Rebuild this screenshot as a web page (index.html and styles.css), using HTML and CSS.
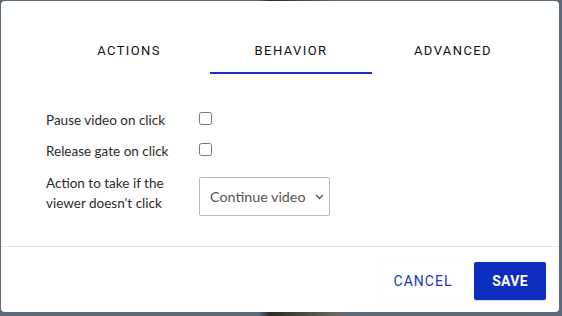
FILE: index.html
```html
<!DOCTYPE html>
<html lang="en">

<head>
  <meta charset="UTF-8" />
  <meta name="viewport" content="width=device-width, initial-scale=1.0" />
  <title>Behavior</title>
  <link rel="stylesheet" href="styles.css">
</head>

<body>
  <div class="dialog">
    <nav class="tabs">
      <div class="tab">Actions</div>
      <div class="tab active">Behavior</div>
      <div class="tab">Advanced</div>
    </nav>

    <form class="form">
      <div class="row">
        <label for="pause">Pause video on click</label>
        <input type="checkbox" id="pause" />
      </div>
      <div class="row">
        <label for="release">Release gate on click</label>
        <input type="checkbox" id="release" />
      </div>
      <div class="row row-top">
        <label for="action">Action to take if the<br />viewer doesn't click</label>
        <div class="select-wrap">
          <select id="action">
            <option>Continue video</option>
            <option>Pause video</option>
          </select>
          <svg class="chevron" width="9" height="6" viewBox="0 0 9 6">
            <path d="M1 1l3.5 3.5L8 1" fill="none" stroke="#555" stroke-width="1.4" />
          </svg>
        </div>
      </div>
    </form>

    <div class="footer">
      <button type="button" class="btn btn-cancel">Cancel</button>
      <button type="button" class="btn btn-save">Save</button>
    </div>
  </div>
</body>

</html>
```

FILE: styles.css
```css
html,
body {
  margin: 0;
  height: 100%;
}

body {
  background: linear-gradient(90deg, #5b6b7a 0%, #5b6b7a 46%, #2a2a26 48%, #6b6a5e 60%, #5b6b7a 62%);
  padding: 1px 3px 4px 1px;
  box-sizing: border-box;
  font-family: Lato, "Noto Sans", sans-serif;
}

.dialog {
  background: white;
  border-radius: 4px;
  height: 100%;
  display: flex;
  flex-direction: column;
}

.tabs {
  display: grid;
  grid-template-columns: repeat(3, 162px);
  justify-content: center;
  margin: 28px 0 0 22px;
}

.tab {
  text-align: center;
  font-family: Roboto, "Liberation Sans", sans-serif;
  font-size: 13px;
  line-height: 16px;
  letter-spacing: 1.4px;
  text-transform: uppercase;
  color: #111;
  padding: 14px 0 13px;
  border-bottom: 2px solid transparent;
}

.tab.active {
  border-bottom-color: #1431bd;
}

.form {
  padding: 36px 0 0 45px;
  flex: 1;
}

.row {
  display: grid;
  grid-template-columns: 153px auto;
  align-items: center;
  margin-bottom: 11px;
}

.row-top {
  align-items: start;
  margin-top: 12px;
}

label {
  font-size: 13.5px;
  line-height: 20px;
  color: #2b2b2b;
}

input[type="checkbox"] {
  margin: -4px 0 0 0;
  width: 13px;
  height: 13px;
  justify-self: start;
}

.select-wrap {
  position: relative;
  width: 131px;
  margin-top: 4px;
}

select {
  appearance: none;
  width: 131px;
  height: 39px;
  border: 1px solid #b9b9b9;
  border-radius: 2px;
  background: white;
  padding: 0 0 0 10px;
  font-family: Lato, "Noto Sans", sans-serif;
  font-size: 14.3px;
  color: #555;
}

.chevron {
  position: absolute;
  right: 6px;
  top: 17px;
}

.footer {
  border-top: 1px solid #e4e4e4;
  display: flex;
  justify-content: flex-end;
  gap: 5px;
  padding: 15px 13px 0 0;
  height: 50px;
}

.btn {
  height: 38px;
  border: none;
  border-radius: 2px;
  font-family: Roboto, "Liberation Sans", sans-serif;
  font-size: 14px;
  text-transform: uppercase;
  cursor: pointer;
}

.btn-cancel {
  width: 92px;
  background: white;
  color: #1a36c0;
  letter-spacing: 1px;
  box-shadow: 0 0 2px rgba(0, 0, 0, 0.04);
}

.btn-save {
  width: 72px;
  background: #0c2dbf;
  color: white;
  font-weight: bold;
  letter-spacing: 0.3px;
  box-shadow: 0 1px 1px rgba(0, 0, 0, 0.15);
}
```
